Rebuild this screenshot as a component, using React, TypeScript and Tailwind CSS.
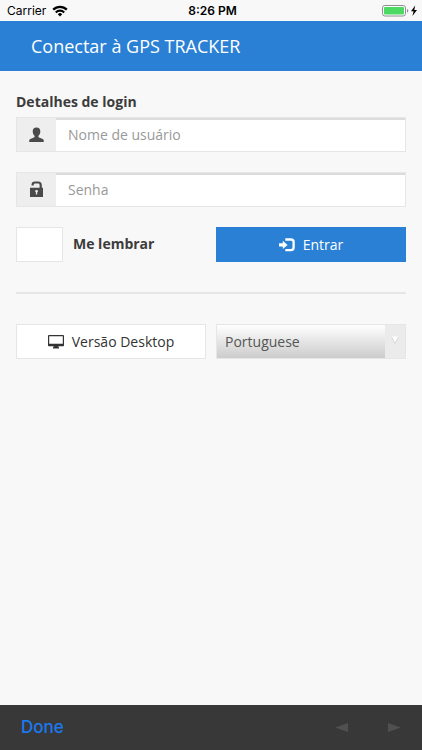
import React from "react";

function WifiIcon() {
  return (
    <svg width="16" height="12" viewBox="0 0 16 12" fill="none" stroke="#000" strokeWidth="2.200" aria-hidden="true">
      <path d="M1.2 4.600a9.600 9.600 0 0 1 13.600 0" />
      <path d="M3.800 7.400a5.900 5.900 0 0 1 8.400 0" />
      <path d="M5.800 9.200a3.100 3.100 0 0 1 4.400 0L8 11.500Z" fill="#000" stroke="none" />
    </svg>
  );
}

function BatteryIcon() {
  return (
    <svg width="36" height="12" viewBox="0 0 36 12" aria-hidden="true">
      <rect x="0.5" y="0.5" width="23" height="10.5" rx="2.4" fill="#fff" stroke="#8e8e8e" />
      <rect x="2" y="2" width="20" height="7.5" rx="1" fill="#4cd964" />
      <path d="M25 4c1 .4 1.300 1 1.300 1.800S26 7.200 25 7.600Z" fill="#8e8e8e" />
      <path d="M33.200.6 29 6.300h2.600L30.400 11 35 5.100h-2.700Z" fill="#000" />
    </svg>
  );
}

function UserIcon() {
  return (
    <svg width="15" height="16" viewBox="0 0 15 16" fill="#4a4a4a" aria-hidden="true">
      <path d="M7.500.6C5 .6 3.700 2.200 3.700 4.600c0 1.700.8 3.300 1.800 4.200.3.900.1 1.400-.6 1.800L1.300 12C.5 12.400.2 13 .2 15h14.600c0-2-.3-2.600-1.100-3l-3.600-1.400c-.7-.4-.9-.9-.6-1.800 1-.9 1.800-2.500 1.800-4.200C11.300 2.200 10 .6 7.500.6Z" />
    </svg>
  );
}

function UnlockIcon() {
  return (
    <svg width="13" height="17" viewBox="0 0 13 17" aria-hidden="true">
      <path d="M2.600 4.600V3.800c0-1.600 1-2.300 2.400-2.300h3.200c1.500 0 2.500.8 2.500 2.400v4" fill="none" stroke="#4a4a4a" strokeWidth="2.200" />
      <path fillRule="evenodd" fill="#4a4a4a" d="M0 6.800h13V16H0ZM5.200 10.200c0 .6.300.9.700 1.100v2.200h1.300v-2.200c.4-.2.700-.5.700-1.100 0-.8-.6-1.300-1.350-1.300S5.200 9.400 5.200 10.200Z" />
    </svg>
  );
}

function EnterIcon() {
  return (
    <svg width="16" height="14" viewBox="0 0 16 14" aria-hidden="true">
      <path d="M6.300 1.500h5.700q2.600 0 2.600 2.600v5.500q0 2.600-2.600 2.600H6.300" fill="none" stroke="#fff" strokeWidth="2.300" />
      <path d="M0 5.200h3.800V2.700L8.600 6.900l-4.800 4.200V8.600H0Z" fill="#fff" />
    </svg>
  );
}

function MonitorIcon() {
  return (
    <svg width="16" height="14" viewBox="0 0 16 14" aria-hidden="true">
      <path fillRule="evenodd" fill="#333" d="M1 0h14q1 0 1 1v9.500q0 .8-1 .8h-4.700l.3 1H11v1.200H5v-1.200h.4l.3-1H1q-1 0-1-.8V1q0-1 1-1ZM1.200 1.200v7.500h13.600v-7.500Z" />
    </svg>
  );
}

type FieldProps = { id: string; label: string; type: string; icon: React.ReactNode };

function Field({ id, label, type, icon }: FieldProps) {
  return (
    <div className="flex h-[35px] border border-[#e6e6e6] bg-white">
      <label htmlFor={id} aria-label={label} className="flex w-[39px] shrink-0 items-center justify-center bg-[#eeeeee]">
        {icon}
      </label>
      <input
        id={id}
        type={type}
        placeholder={label}
        className="min-w-0 flex-1 border-t-2 border-[#dcdcdc] bg-white px-3 pb-0.5 text-sm text-[#444] outline-none placeholder:text-[#999]"
      />
    </div>
  );
}

export default function App() {
  return (
    <div className="flex min-h-screen flex-col bg-[#f8f8f8] font-['Open_Sans',sans-serif] text-sm text-[#333]">
      <div className="grid h-[21px] grid-cols-3 items-center pr-1 pl-[7px] font-['Inter',sans-serif] text-xs text-black">
        <div className="flex items-center gap-1.5">
          <span>Carrier</span>
          <WifiIcon />
        </div>
        <span className="text-center font-semibold">8:26 PM</span>
        <div className="flex justify-end">
          <BatteryIcon />
        </div>
      </div>

      <header className="flex h-[50px] items-center bg-[#2a80d5] px-[31px]">
        <h1 className="text-lg text-white">Conectar à GPS TRACKER</h1>
      </header>

      <main className="flex-1 px-4 pt-5">
        <form onSubmit={(e) => e.preventDefault()}>
          <h2 className="mb-1 leading-[22px] font-bold text-[#3c3c3c]">Detalhes de login</h2>
          <div className="flex flex-col gap-5">
            <Field id="user" label="Nome de usuário" type="text" icon={<UserIcon />} />
            <Field id="password" label="Senha" type="password" icon={<UnlockIcon />} />
            <div className="grid grid-cols-2 gap-2.5">
              <div className="flex h-[35px] items-center gap-2.5">
                <input
                  id="remember"
                  type="checkbox"
                  className="h-[35px] w-[47px] appearance-none border border-[#e6e6e6] bg-white checked:bg-[#2a80d5]"
                />
                <label htmlFor="remember" className="pb-0.5 font-bold text-[#3c3c3c]">
                  Me lembrar
                </label>
              </div>
              <button type="submit" className="flex h-[35px] items-center justify-center gap-2 bg-[#2a80d5] text-white">
                <EnterIcon />
                Entrar
              </button>
            </div>
          </div>

          <hr className="my-[30px] border-t-2 border-[#e6e6e6]" />

          <div className="grid grid-cols-2 gap-2.5">
            <button type="button" className="flex h-[35px] items-center justify-center gap-2 border border-[#e6e6e6] bg-white">
              <MonitorIcon />
              Versão Desktop
            </button>
            <div className="grid h-[35px] border border-[#e6e6e6] bg-[#ebebeb]">
              <select
                aria-label="Idioma"
                className="col-start-1 row-start-1 mr-5 appearance-none bg-linear-to-b from-white to-[#cccccc] px-2 text-[#555] outline-none"
              >
                <option>Portuguese</option>
              </select>
              <svg
                width="8"
                height="8"
                viewBox="0 0 8 8"
                aria-hidden="true"
                className="pointer-events-none col-start-1 row-start-1 mt-[11px] mr-1.5 justify-self-end"
              >
                <path d="M0 .5h8L4 8Z" fill="#fff" />
                <path d="M.5.700 4 7.500 7.500.7" fill="none" stroke="#ccc" strokeWidth="0.8" />
              </svg>
            </div>
          </div>
        </form>
      </main>

      <footer className="flex h-[45px] items-center justify-between bg-[#383838] px-[21px] font-['Inter',sans-serif]">
        <button type="button" className="font-['Inter',sans-serif] text-[17px] font-medium text-[#1a7af0]">
          Done
        </button>
        <div className="flex gap-10">
          <button type="button" aria-label="Voltar">
            <svg width="13" height="9" viewBox="0 0 13 9" aria-hidden="true">
              <path d="M13 0v9L0 4.500Z" fill="#505050" />
            </svg>
          </button>
          <button type="button" aria-label="Avançar">
            <svg width="13" height="9" viewBox="0 0 13 9" aria-hidden="true">
              <path d="M0 0v9l13-4.500Z" fill="#505050" />
            </svg>
          </button>
        </div>
      </footer>
    </div>
  );
}
